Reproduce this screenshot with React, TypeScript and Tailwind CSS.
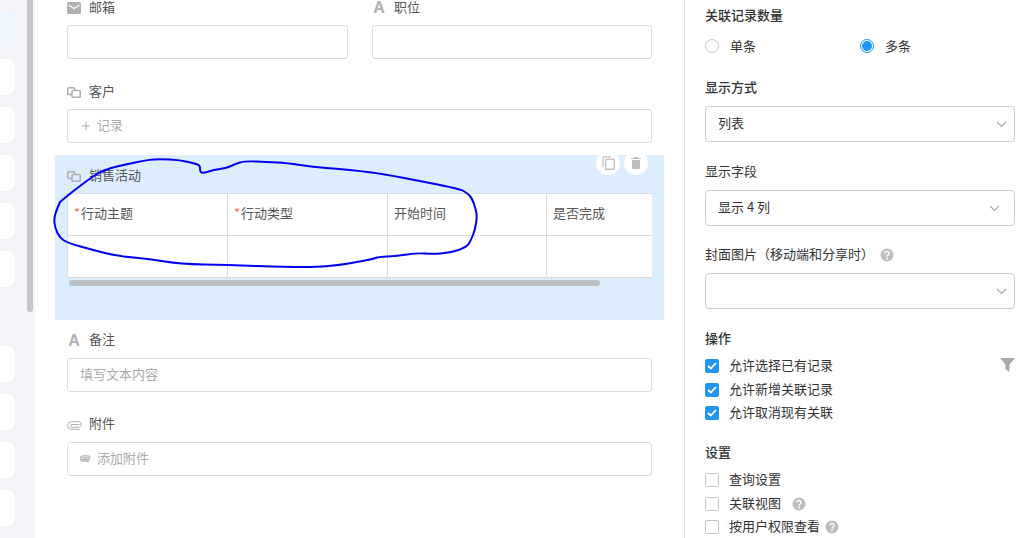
import React from 'react';

const font = { fontFamily: '"Noto Sans CJK SC", "Noto Sans", sans-serif' };

const MailIcon = () => (
  <svg width="14" height="12" viewBox="0 0 14 12" className="shrink-0">
    <rect width="14" height="12" rx="1.5" fill="#b0b0b0" />
    <path d="M1.5 3 L7 6.5 L12.5 3" fill="none" stroke="#fff" strokeWidth="1.3" />
  </svg>
);

const LinkIcon = () => (
  <svg width="14" height="11" viewBox="0 0 14 11" fill="none" stroke="#b0b0b0" strokeWidth="1.6" className="shrink-0">
    <path d="M5 7.5 H2 a1.3 1.3 0 0 1 -1.3 -1.3 V2 A1.3 1.3 0 0 1 2 0.8 H6.5 A1.3 1.3 0 0 1 7.8 2 V4" />
    <rect x="5" y="3.5" width="8.3" height="6.8" rx="1.4" />
  </svg>
);

const LetterIcon = () => (
  <span className="w-[14px] shrink-0 text-center text-[16px] leading-none font-bold text-[#b0b0b0]" style={{ fontFamily: '"Liberation Sans", sans-serif' }}>
    A
  </span>
);

const ClipIcon = ({ small }: { small?: boolean }) => (
  <svg width={small ? 11 : 16} height={small ? 7 : 9} viewBox="0 0 16 9" fill="none" stroke={small ? '#b4b4b4' : '#b0b0b0'} strokeWidth={small ? 1.8 : 1} strokeLinecap="round" className="shrink-0">
    <path d="M12.5 8.3 H4.3 a3.8 3.8 0 0 1 0 -7.6 H12.2 a3 3 0 0 1 0 5.6 H5 a1.4 1.4 0 0 1 0 -2.8 H12" />
  </svg>
);

const Chevron = () => (
  <svg width="11" height="7" viewBox="0 0 11 7" fill="none" stroke="#a8a8a8" strokeWidth="1.1" className="shrink-0">
    <path d="M1 1 L5.5 5.5 L10 1" />
  </svg>
);

const Help = () => (
  <svg width="14" height="14" viewBox="0 0 14 14" className="shrink-0">
    <circle cx="7" cy="7" r="6.5" fill="#bdbdbd" />
    <path d="M5 5.4 a2 2 0 1 1 3.2 1.6 c-0.8 0.6 -1.2 0.9 -1.2 1.7" fill="none" stroke="#fff" strokeWidth="1.4" />
    <circle cx="7" cy="10.5" r="0.9" fill="#fff" />
  </svg>
);

const Label = ({ icon, text, raised }: { icon: React.ReactNode; text: string; raised?: boolean }) => (
  <div className="flex h-[20px] items-center text-[13px] text-[#555]">
    <span className="flex w-[22px] items-center pt-[2px]">{icon}</span>
    <span className={`leading-[12px] ${raised ? 'mb-[2px]' : ''}`}>{text}</span>
  </div>
);

const Input = ({ children }: { children?: React.ReactNode }) => (
  <div className="mt-2 flex h-[34px] items-center rounded-[3px] border border-[#ddd] bg-white px-3 pb-[3px] text-[13px] text-[#aaa]">
    {children}
  </div>
);

const Head = ({ children, bold, className }: { children: React.ReactNode; bold?: boolean; className?: string }) => (
  <div className={`flex h-[20px] items-center pb-[2px] text-[13px] text-[#333] ${bold ? 'font-medium' : ''} ${className || ''}`}>{children}</div>
);

const Select = ({ text, chevronPad }: { text?: string; chevronPad: string }) => (
  <div className={`mt-2 flex h-[36px] items-center justify-between rounded-[4px] border border-[#ccc] bg-white pl-3 text-[13px] text-[#333] ${chevronPad}`}>
    <span className="pb-[3px]">{text}</span>
    <Chevron />
  </div>
);

const Check = ({ on, text, children }: { on?: boolean; text: string; children?: React.ReactNode }) => (
  <div className="flex h-[14px] items-center text-[13px] text-[#333]">
    <span className={`mr-[10px] flex h-[14px] w-[14px] shrink-0 items-center justify-center rounded-[2px] border ${on ? 'border-[#2196f3] bg-[#2196f3]' : 'border-[#c4c4c4] bg-white'}`}>
      {on && (
        <svg width="10" height="8" viewBox="0 0 10 8" fill="none" stroke="#fff" strokeWidth="1.8">
          <path d="M1 4 L3.8 6.5 L9 1" />
        </svg>
      )}
    </span>
    <span className="pb-[2px]">{text}</span>
    {children}
  </div>
);

const cols = ['行动主题', '行动类型', '开始时间', '是否完成'];
const colWidths = ['w-[160px]', 'w-[160px]', 'w-[159px]', 'flex-1'];

// pen stroke drawn over the screenshot
const inkPoints = [
  [60, 202], [72, 192], [88, 180], [98, 173], [110, 168], [128, 164], [147, 160], [160, 159], [180, 160], [197, 164], [200, 166],
  [200, 170], [201, 173], [206, 172.5], [213, 170], [227, 168], [235, 164], [245, 161], [267, 162], [287, 163], [313, 167],
  [340, 169], [360, 171], [383, 174], [420, 181], [460, 189], [467, 193], [472, 198], [476, 210], [477, 217], [475, 230],
  [471, 240], [467, 247], [450, 253], [432, 254], [417, 253], [397, 256], [378, 257], [373, 259], [357, 262], [340, 265],
  [317, 267], [287, 267], [227, 265], [180, 264], [150, 259], [117, 256], [93, 250], [68, 243], [60, 238], [55, 228], [54, 218],
  [57, 209], [60, 202],
];

const inkPath =
  inkPoints
    .map((p, i) => {
      if (i === 0) return `M${p[0]} ${p[1]}`;
      const prev = inkPoints[i - 1];
      return `Q${prev[0]} ${prev[1]} ${(prev[0] + p[0]) / 2} ${(prev[1] + p[1]) / 2}`;
    })
    .join(' ') + ' L60 202';

export default function App() {
  return (
    <div className="flex h-[538px] w-[1029px] overflow-hidden bg-white" style={font}>
      {/* Left rail */}
      <div className="flex h-full w-[35px] shrink-0 bg-[#f3f3f8]">
        <div className="flex w-[15px] shrink-0 flex-col pt-[11px]">
          <div className="h-[36px] rounded-r-lg bg-[#eef7ff]" />
          {[0, 1, 2, 3, 4].map(i => (
            <div key={i} className="mt-3 h-[36px] rounded-r-lg bg-white" />
          ))}
          {[0, 1, 2, 3].map(i => (
            <div key={i} className={`h-[36px] rounded-r-lg bg-white ${i === 0 ? 'mt-[59px]' : 'mt-3'}`} />
          ))}
        </div>
        <div className="ml-3 h-[312px] w-[6px] rounded-b-[3px] bg-[#c6c6c6]" />
      </div>

      {/* Form canvas */}
      <div className="relative w-[649px] shrink-0">
        <div className="-mt-[3px] px-[32px]">
          <div className="flex gap-6">
            <div className="flex-1">
              <Label icon={<MailIcon />} text="邮箱" />
              <Input />
            </div>
            <div className="w-[280px]">
              <Label icon={<LetterIcon />} text="职位" />
              <Input />
            </div>
          </div>
          <div className="mt-[22px]">
            <Label icon={<LinkIcon />} text="客户" />
            <Input>
              <svg width="8" height="8" viewBox="0 0 8 8" stroke="#aaa" strokeWidth="1" className="mt-[2px] mr-[7px] ml-[2px] shrink-0">
                <path d="M4 0 V8 M0 4 H8" />
              </svg>
              记录
            </Input>
          </div>
        </div>

        {/* Selected field */}
        <div className="relative mt-3 ml-5 h-[165px] w-[609px] bg-[#dcedfd] pt-[10px] pr-3 pl-3">
          <Label icon={<LinkIcon />} text="销售活动" />
          <div className="absolute top-[-4px] right-[16px] flex gap-1">
            <div className="flex h-6 w-6 items-center justify-center rounded-full bg-white">
              <svg width="13" height="14" viewBox="0 0 13 14" fill="none" stroke="#c4c4c4" strokeWidth="1.2">
                <rect x="3.6" y="3.2" width="8.6" height="10" rx="0.8" strokeWidth="1.5" />
                <path d="M1 11 V1.6 A0.8 0.8 0 0 1 1.8 0.8 H9" />
              </svg>
            </div>
            <div className="flex h-6 w-6 items-center justify-center rounded-full bg-white">
              <svg width="10" height="12" viewBox="0 0 10 12" fill="#bdbdbd">
                <path d="M3.5 0 H6.5 L7 1 H10 V2 H0 V1 H3 Z" />
                <path d="M1 3 H9 V11 a1 1 0 0 1 -1 1 H2 a1 1 0 0 1 -1 -1 Z" />
              </svg>
            </div>
          </div>
          <div className="mt-2 h-[85px] border-t border-b border-l border-[#dcdcdc] bg-white">
            <div className="flex h-[42px] border-b border-[#dcdcdc] text-[13px] text-[#555]">
              {cols.map((c, i) => (
                <div key={c} className={`flex items-center pb-[3px] pl-[6px] ${colWidths[i]} ${i < 3 ? 'border-r border-[#dcdcdc]' : ''}`}>
                  {i < 2 && <span className="mr-[1px] text-[#ff6b6b]">*</span>}
                  {c}
                </div>
              ))}
            </div>
            <div className="flex h-[41px]">
              {cols.map((c, i) => (
                <div key={c} className={`${colWidths[i]} ${i < 3 ? 'border-r border-[#dcdcdc]' : ''}`} />
              ))}
            </div>
          </div>
          <div className="mt-[2px] ml-[2px] h-[6px] w-[531px] rounded-[3px] bg-[#bdc0c4]" />
        </div>

        <div className="mt-[10px] px-[32px]">
          <Label raised icon={<LetterIcon />} text="备注" />
          <Input>填写文本内容</Input>
          <div className="mt-[22px]">
            <Label raised icon={<ClipIcon />} text="附件" />
            <Input>
              <span className="mt-[2px] mr-[6px] flex"><ClipIcon small /></span>添加附件
            </Input>
          </div>
        </div>

        {/* Hand-drawn annotation */}
        <svg className="pointer-events-none absolute top-0 left-[-35px]" width="684" height="538" fill="none" stroke="#0000f0" strokeWidth="2" strokeLinejoin="round" strokeLinecap="round">
          <path d={inkPath} />
        </svg>
      </div>

      {/* Settings panel */}
      <div className="h-full flex-1 border-l border-[#ddd] pt-[6px] pr-[14px] pl-5">
        <Head bold>关联记录数量</Head>
        <div className="mt-[13px] flex h-[14px] items-center text-[13px] text-[#333]">
          <span className="mr-[11px] h-[14px] w-[14px] rounded-full border border-[#c8c8c8] bg-white" />
          <span className="w-[130px]">单条</span>
          <span className="mr-[11px] flex h-[14px] w-[14px] items-center justify-center rounded-full border border-[#2196f3]">
            <span className="h-[10px] w-[10px] rounded-full bg-[#2196f3]" />
          </span>
          <span>多条</span>
        </div>
        <Head bold className="mt-[25px]">显示方式</Head>
        <Select text="列表" chevronPad="pr-[7px]" />
        <Head className="mt-[20px]">显示字段</Head>
        <Select text="显示 4 列" chevronPad="pr-[14px]" />
        <Head className="mt-[19px]">
          封面图片（移动端和分享时）
          <span className="mt-[2px] ml-[6px]"><Help /></span>
        </Head>
        <Select chevronPad="pr-[7px]" />
        <Head bold className="mt-[20px]">操作</Head>
        <div className="relative mt-[10px] flex flex-col gap-[9.5px]">
          <Check on text="允许选择已有记录" />
          <Check on text="允许新增关联记录" />
          <Check on text="允许取消现有关联" />
          <svg className="absolute top-[-1px] right-0" width="15" height="14" viewBox="0 0 15 14" fill="#a9a9a9">
            <path d="M0 0 H15 L9.5 6.5 V14 L5.5 11.5 V6.5 Z" />
          </svg>
        </div>
        <Head bold className="mt-[23px]">设置</Head>
        <div className="mt-[10px] flex flex-col gap-[9.5px]">
          <Check text="查询设置" />
          <Check text="关联视图">
            <span className="ml-[11px]"><Help /></span>
          </Check>
          <Check text="按用户权限查看">
            <span className="ml-[5px]"><Help /></span>
          </Check>
        </div>
      </div>
    </div>
  );
}
